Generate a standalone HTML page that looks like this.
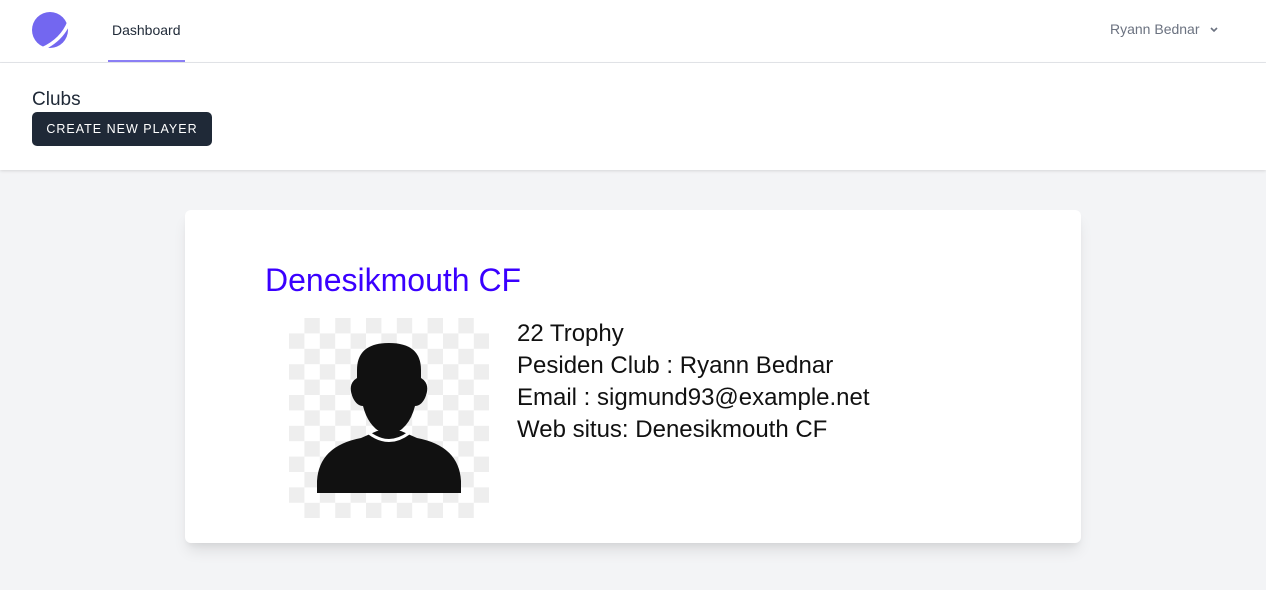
<!DOCTYPE html>
<html><head><style>
*{margin:0;padding:0;box-sizing:border-box}
body{width:1266px;height:590px;background:#f3f4f6;font-family:"Liberation Sans",sans-serif;position:relative;overflow:hidden}
.nav{position:absolute;left:0;top:0;width:1266px;height:63px;background:#fff;border-bottom:1px solid #e5e7eb}
.hdr{position:absolute;left:0;top:63px;width:1266px;height:107px;background:#fff;box-shadow:0 1px 3px rgba(0,0,0,.12)}
.card{position:absolute;left:185px;top:210px;width:896px;height:333px;background:#fff;border-radius:6px;box-shadow:0 10px 15px -3px rgba(0,0,0,.1),0 4px 6px -2px rgba(0,0,0,.05)}
.img{position:absolute;left:289px;top:318px;width:200px;height:200px;background:conic-gradient(#eee 25%,#fff 0 50%,#eee 0 75%,#fff 0);background-size:30.8px 30.8px}
.info{position:absolute;left:517px;top:318px;font-size:24px;line-height:32px;color:#111}
</style></head><body>
<div class="nav">
<svg style="position:absolute;left:32px;top:12px" width="36" height="36" viewBox="0 0 36 36"><circle cx="18" cy="18" r="18" fill="#7367f0"/><path d="M10 37 Q30 28 37 10" stroke="#fff" stroke-width="3.5" fill="none"/></svg>
<div style="position:absolute;left:112px;top:22px;font-size:14px;color:#1f2937">Dashboard</div>
<div style="position:absolute;left:108px;top:60px;width:77px;height:2px;background:#8b7ff5"></div>
<div style="position:absolute;left:1110px;top:21px;font-size:14px;color:#6b7280">Ryann Bednar</div>
<svg style="position:absolute;left:1209px;top:26px" width="10" height="8" viewBox="0 0 10 8"><path d="M2 2l3 3 3-3" stroke="#6b7280" stroke-width="1.6" fill="none"/></svg>
</div>
<div class="hdr">
<div style="position:absolute;left:32px;top:26px;font-size:19px;color:#1f2937">Clubs</div>
<div style="position:absolute;left:32px;top:49px;width:180px;height:34px;background:#1f2937;border-radius:5px;color:#fff;font-size:12.5px;letter-spacing:1px;text-align:center;line-height:34px">CREATE NEW PLAYER</div>
</div>
<div class="card"></div>
<div style="position:absolute;left:265px;top:262px;font-size:32px;color:#3a00ff">Denesikmouth CF</div>
<div class="img"><svg width="200" height="200" viewBox="0 0 200 200"><path d="M28 175 L28 163 Q30 128 72 120 L88 113 L112 113 L128 120 Q170 128 172 163 L172 175 Z" fill="#111"/><path d="M80 115 Q100 130 120 115" stroke="#fff" stroke-width="3" fill="none"/><path d="M100 25 Q68 25 68 52 L68 60 Q58 66 64 80 Q68 88 74 88 Q80 112 100 118 Q120 112 126 88 Q132 88 136 80 Q142 66 132 60 L132 52 Q132 25 100 25 Z" fill="#111"/></svg></div>
<div class="info">22 Trophy<br>Pesiden Club : Ryann Bednar<br>Email : sigmund93@example.net<br>Web situs: Denesikmouth CF</div>
</body></html>
